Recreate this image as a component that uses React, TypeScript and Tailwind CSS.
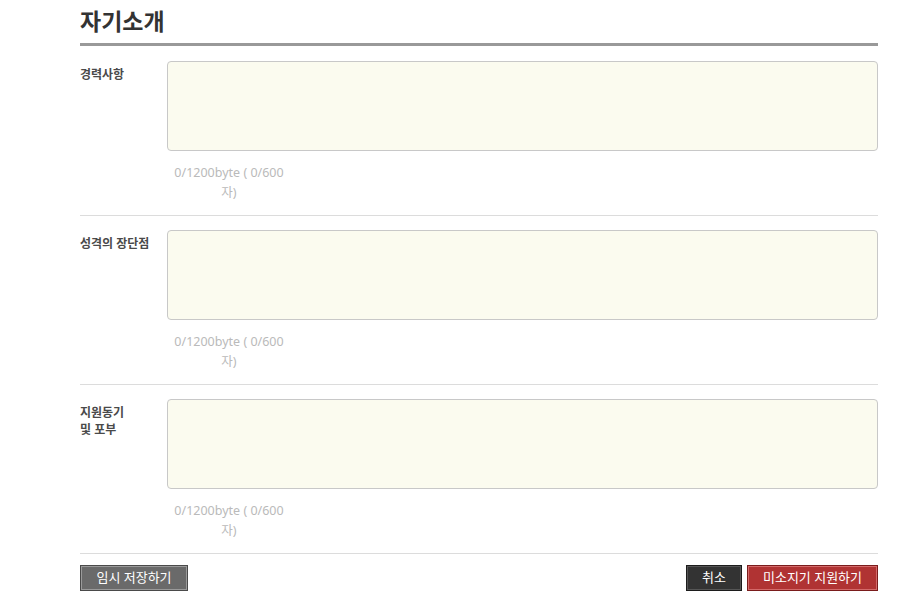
import React, { useState } from 'react';

const rows = [
  { id: 'career', label: ['경력사항'] },
  { id: 'personality', label: ['성격의 장단점'] },
  { id: 'motive', label: ['지원동기', '및 포부'] },
];

function IntroRow({ label }: { label: string[] }) {
  const [text, setText] = useState('');
  return (
    <div className="flex border-b border-[#dcdcdc] pt-[14px] pb-[12px]">
      <div className="w-[87px] shrink-0 pt-[5px] text-[12px] font-bold leading-[17px] text-[#4a4a4a]">
        {label.map((l) => (
          <div key={l}>{l}</div>
        ))}
      </div>
      <div className="flex-1">
        <textarea
          value={text}
          onChange={(e) => setText(e.target.value)}
          className="block h-[90px] w-full resize-none rounded-[4px] border border-[#c8c8c8] bg-[#fbfbef] outline-none"
        />
        <div className="mt-[12px] ml-[6px] w-[112px] text-center text-[12.5px] leading-[20px] text-[#bababa]">
          0/1200byte ( 0/600 자)
        </div>
      </div>
    </div>
  );
}

export default function App() {
  return (
    <div
      className="min-h-[604px] bg-white"
      style={{ fontFamily: '"Noto Sans", "Noto Sans CJK KR", sans-serif' }}
    >
      <div className="ml-[80px] w-[798px]">
        <h2 className="pt-[5px] pb-[6px] text-[23px] font-bold leading-[32px] text-[#333]">
          자기소개
        </h2>
        <div className="mb-[1px] h-[3px] bg-[#999]" />
        {rows.map((r) => (
          <IntroRow key={r.id} label={r.label} />
        ))}
        <div className="flex items-center justify-between pt-[11px]">
          <button className="h-[26px] w-[108px] border border-[#4a4a4a] bg-[#6a6a6a] p-0 text-[13px] text-white shadow-[inset_0_0_0_1px_#9a9a9a]">
            임시 저장하기
          </button>
          <div className="flex gap-[5px]">
            <button className="h-[26px] w-[56px] border border-[#1c1c1c] bg-[#333] text-[13px] text-white shadow-[inset_0_0_0_1px_#555]">
              취소
            </button>
            <button className="h-[26px] w-[131px] border border-[#7a1c1c] bg-[#b03333] text-[13px] text-white shadow-[inset_0_0_0_1px_#d46a6a]">
              미소지기 지원하기
            </button>
          </div>
        </div>
      </div>
    </div>
  );
}
